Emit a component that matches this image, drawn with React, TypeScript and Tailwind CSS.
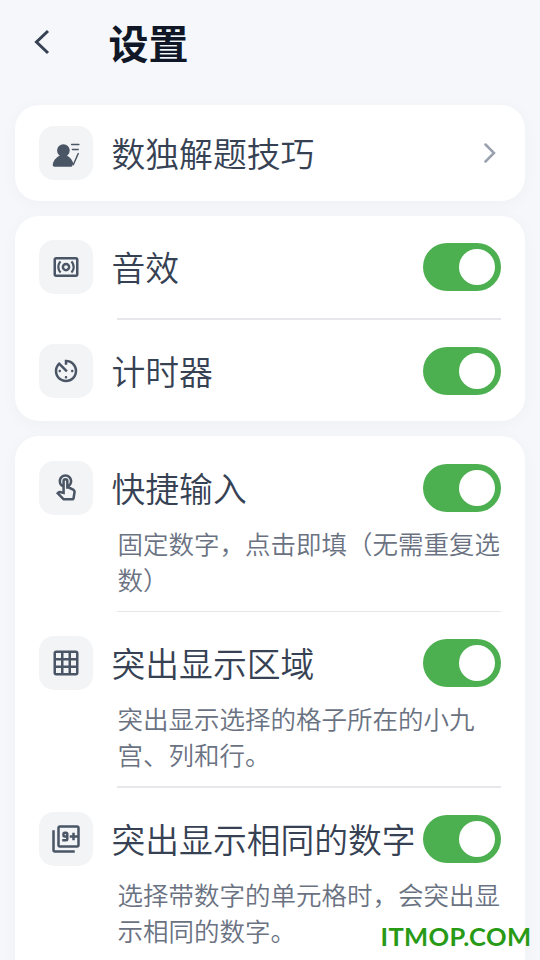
import type { ReactNode } from 'react';
import { MdAvTimer, MdGridOn, MdOutlineFilter9Plus, MdOutlineSurroundSound, MdOutlineTouchApp } from 'react-icons/md';

type Setting = { title: string; icon: ReactNode; lines?: string[] };

const general: Setting[] = [
  { title: '音效', icon: <MdOutlineSurroundSound size={30} /> },
  { title: '计时器', icon: <MdAvTimer size={30} /> },
];

const gameplay: Setting[] = [
  { title: '快捷输入', icon: <MdOutlineTouchApp size={30} />, lines: ['固定数字，点击即填（无需重复选', '数）'] },
  { title: '突出显示区域', icon: <MdGridOn size={30} />, lines: ['突出显示选择的格子所在的小九', '宫、列和行。'] },
  { title: '突出显示相同的数字', icon: <MdOutlineFilter9Plus size={30} />, lines: ['选择带数字的单元格时，会突出显', '示相同的数字。'] },
];

function TutorIcon() {
  return (
    <svg width="30" height="30" viewBox="0 0 30 30" fill="currentColor">
      <circle cx="12.4" cy="12.5" r="6.3" />
      <path d="M1.800 27.500c0-4.300 3.100-7.900 7.200-9.900h6.800c3.300 1.700 5.500 4.500 6.500 7.700l-1.100 2.700c-.2.500-.5.700-1 .7H3c-.7 0-1.200-.4-1.200-1.200z" />
      <path d="M20.600 6.500h7.300M21.400 11.500h5.800" fill="none" stroke="currentColor" strokeWidth="1.400" strokeLinecap="round" />
      <path d="M27.200 15.600 22.300 26.800" fill="none" stroke="currentColor" strokeWidth="1.400" strokeLinecap="round" />
    </svg>
  );
}

function IconTile({ children }: { children: ReactNode }) {
  return <div className="flex size-[54px] shrink-0 items-center justify-center rounded-[15px] bg-gray-100 text-gray-600">{children}</div>;
}

function Toggle() {
  return (
    <button type="button" role="switch" aria-checked="true" className="flex h-12 w-[78px] shrink-0 items-center justify-end rounded-full bg-[#4caf50] pr-1.5">
      <span className="size-9 rounded-full bg-white" />
    </button>
  );
}

function Title({ children }: { children: ReactNode }) {
  return <span className="min-w-0 grow whitespace-nowrap pl-[18.5px] text-[33.8px] font-[350] leading-[54px] text-gray-700">{children}</span>;
}

function Card({ children, className = '' }: { children: ReactNode; className?: string }) {
  return <section className={`rounded-[24px] bg-white px-6 shadow-[0_3px_18px_rgba(17,24,39,0.03)] ${className}`}>{children}</section>;
}

function SettingRow({ title, icon }: Setting) {
  return (
    <div className="flex items-center">
      <IconTile>{icon}</IconTile>
      <Title>{title}</Title>
      <Toggle />
    </div>
  );
}

function Description({ lines }: { lines: string[] }) {
  return (
    <p className="pb-3.5 pl-[78.5px] pt-2.5 text-[25.5px] font-[350] leading-9 text-gray-500">
      {lines.map((line) => <span key={line} className="block whitespace-nowrap">{line}</span>)}
    </p>
  );
}

export default function App() {
  return (
    <main className="relative h-[960px] w-[540px] overflow-hidden bg-[#f5f7fb] font-['Noto_Sans_CJK_SC',sans-serif]">
      <header className="flex h-[105px] items-start pl-[34px] pt-3">
        <button type="button" aria-label="返回" className="flex h-[60px] w-[74.5px] items-center text-gray-700">
          <svg width="16" height="26" viewBox="0 0 16 26" fill="none" stroke="currentColor" strokeWidth="3">
            <path d="M14 2 2.500 13 14 24" />
          </svg>
        </button>
        <h1 className="text-[40px] font-bold leading-[60px] text-gray-900">设置</h1>
      </header>

      <div className="flex flex-col gap-[15px] px-[15px]">
        <Card className="flex h-24 items-center">
          <IconTile><TutorIcon /></IconTile>
          <Title>数独解题技巧</Title>
          <svg className="mr-1 text-gray-400" width="14" height="20" viewBox="0 0 14 20" fill="none" stroke="currentColor" strokeWidth="2.500" strokeLinecap="round">
            <path d="m2.500 1.500 8.500 8.500-8.500 8.500" />
          </svg>
        </Card>

        <Card className="h-[205px] pt-6">
          <SettingRow {...general[0]} />
          <div className="mb-[23.7px] ml-[78px] mt-6 h-[2px] bg-gray-200" />
          <SettingRow {...general[1]} />
        </Card>

        <Card className="h-[560px] pt-[24.6px]">
          {gameplay.map((item, i) => (
            <div key={item.title}>
              <SettingRow title={item.title} icon={item.icon} />
              <Description lines={item.lines ?? []} />
              {i < gameplay.length - 1 && <div className="mb-6 ml-[78px] h-[1.5px] bg-gray-200" />}
            </div>
          ))}
        </Card>
      </div>

      <div className="absolute bottom-1.5 left-[380.5px] whitespace-nowrap font-['Lato',sans-serif] text-[25.5px] font-bold leading-9 tracking-[0.35px] text-[#289a16]">ITMOP.COM</div>
    </main>
  );
}
